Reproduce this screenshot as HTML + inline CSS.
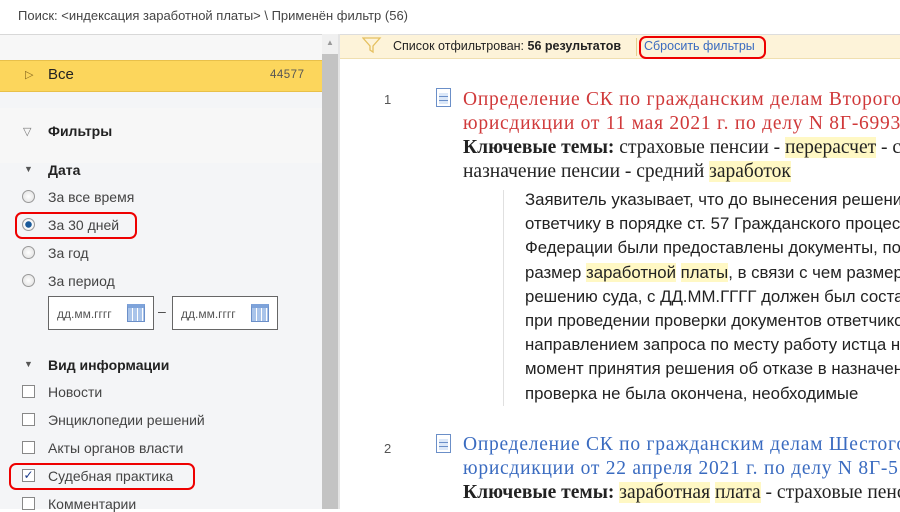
<!DOCTYPE html>
<html><head><meta charset="utf-8"><style>
*{margin:0;padding:0;box-sizing:border-box}
body{width:900px;height:509px;overflow:hidden;background:#fff;font-family:"Liberation Sans",sans-serif;position:relative;color:#333}
.a{position:absolute;white-space:nowrap}
.crumb{left:18px;top:8px;font-size:13px;color:#444}
.left{position:absolute;left:0;top:34px;width:322px;height:475px;background:#f4f5f7;border-top:1px solid #d8d8d8}
.lefttop{position:absolute;left:0;top:0;width:322px;height:25px;background:#f7f7f7}
.all{position:absolute;left:0;top:25px;width:322px;height:32px;background:#fcd65c;border-top:1px solid #e8c04a;border-bottom:1px solid #e8c04a}
.fl{position:absolute;left:0;top:73px;width:322px;height:55px;background:#f7f7f7}
.sb{position:absolute;left:322px;top:34px;width:16px;height:475px;background:#c3c3c3}
.sbt{position:absolute;left:322px;top:34px;width:16px;height:20px;background:#f0f0f0}
.sep{position:absolute;left:338px;top:34px;width:2px;height:475px;background:#e4e4e4}
.bar{position:absolute;left:340px;top:34px;width:560px;height:25px;background:#fdf3d9;border-bottom:1px solid #f0dfb0;border-top:1px solid #ddd}
.t{font-size:14px;color:#444}
.b{font-weight:bold;color:#222}
.radio{position:absolute;width:13px;height:13px;border-radius:50%;border:1px solid #999;background:radial-gradient(#fff,#ddd)}
.cb{position:absolute;width:13px;height:13px;border:1px solid #888;background:#fff}
.date{position:absolute;top:296px;width:106px;height:34px;border:1px solid #666;background:#fff;font-size:12px;color:#555;padding:10px 8px}
.cal{position:absolute;right:8px;top:7px;width:18px;height:18px;border:1px solid #6b8fc8;background:repeating-linear-gradient(90deg,#a9c4ea 0 4px,#fff 4px 5px);border-top:4px solid #7ea3da}
.red{position:absolute;border:2.5px solid #e00;border-radius:7px}
.ser{font-family:"Liberation Serif",serif;font-size:19.5px;letter-spacing:.75px}
.ser2{font-family:"Liberation Serif",serif;font-size:19.5px;letter-spacing:0}
.sans{font-size:16.8px;color:#222}
.hl{background:#fff8c4}
.doc{position:absolute;width:15px;height:19px;border:1px solid #6b8fc8;background:repeating-linear-gradient(180deg,#dce8f8 0 3px,#6b8fc8 3px 4px);background-clip:content-box;padding:4px 2px 2px}
</style></head><body>
<div class="a crumb">Поиск: &lt;индексация заработной платы&gt; \ Применён фильтр (56)</div>
<div class="left"><div class="lefttop"></div><div class="all"></div><div class="fl"></div></div>
<div class="a" style="left:25px;top:68px;font-size:11px;color:#8a6a20">▷</div>
<div class="a t" style="left:48px;top:66px;color:#222;font-size:15px">Все</div>
<div class="a" style="left:270px;top:69px;font-size:11.5px;color:#555;letter-spacing:.5px">44577</div>
<div class="a" style="left:23px;top:125px;font-size:11px;color:#777">▽</div>
<div class="a t b" style="left:48px;top:123px">Фильтры</div>
<div class="a" style="left:24px;top:164px;font-size:9px;color:#555">▼</div>
<div class="a t b" style="left:48px;top:162px">Дата</div>
<div class="radio" style="left:22px;top:190px"></div><div class="a t" style="left:48px;top:189px">За все время</div>
<div class="radio" style="left:22px;top:218px;background:radial-gradient(#1a5a9a 0 3px,#fff 3.5px,#ddd)"></div><div class="a t" style="left:48px;top:217px">За 30 дней</div>
<div class="radio" style="left:22px;top:246px"></div><div class="a t" style="left:48px;top:245px">За год</div>
<div class="radio" style="left:22px;top:274px"></div><div class="a t" style="left:48px;top:273px">За период</div>
<div class="date" style="left:48px">дд.мм.гггг<div class="cal"></div></div>
<div class="a t" style="left:158px;top:303px">–</div>
<div class="date" style="left:172px">дд.мм.гггг<div class="cal"></div></div>
<div class="a" style="left:24px;top:359px;font-size:9px;color:#555">▼</div>
<div class="a t b" style="left:48px;top:357px">Вид информации</div>
<div class="cb" style="left:22px;top:385px"></div><div class="a t" style="left:48px;top:384px">Новости</div>
<div class="cb" style="left:22px;top:413px"></div><div class="a t" style="left:48px;top:412px">Энциклопедии решений</div>
<div class="cb" style="left:22px;top:441px"></div><div class="a t" style="left:48px;top:440px">Акты органов власти</div>
<div class="cb" style="left:22px;top:469px;font-size:12px;line-height:11px;color:#1a3a8a;text-align:center">✓</div><div class="a t" style="left:48px;top:468px">Судебная практика</div>
<div class="cb" style="left:22px;top:497px"></div><div class="a t" style="left:48px;top:496px">Комментарии</div>
<div class="red" style="left:15px;top:212px;width:122px;height:27px"></div>
<div class="red" style="left:9px;top:463px;width:186px;height:27px"></div>
<div class="sb"></div><div class="sbt"></div><div class="a" style="left:326px;top:38px;font-size:8px;color:#999">▲</div>
<div class="sep"></div>
<div class="bar"></div>
<svg class="a" style="left:362px;top:36px" width="20" height="18"><path d="M1 2H18L11 10V16L8 14V10Z" fill="none" stroke="#e5c060" stroke-width="1.3"/></svg>
<div class="a" style="left:393px;top:39px;font-size:12.5px;color:#222">Список отфильтрован: <b>56 результатов</b></div>
<div class="a" style="left:636px;top:38px;width:1px;height:18px;background:#e5cf90"></div>
<div class="a" style="left:644px;top:39px;font-size:12.5px;color:#3a6bc0">Сбросить фильтры</div>
<div class="red" style="left:639px;top:36px;width:127px;height:23px"></div>
<div style="position:absolute;left:340px;top:60px;width:560px;height:449px;overflow:hidden">
<div class="a" style="left:44px;top:32px;font-size:13px;color:#555">1</div>
<div class="doc" style="left:96px;top:28px"></div>
<div class="a ser" style="left:123px;top:28px;color:#d0393a;line-height:24px">Определение СК по гражданским делам Второго кассационного суда общей<br>юрисдикции от 11 мая 2021 г. по делу N 8Г-6993/2021</div>
<div class="a ser2" style="left:123px;top:76px;color:#222;line-height:24px"><b>Ключевые темы:</b> страховые пенсии - <span class="hl">перерасчет</span> - страховые пенсии<br>назначение пенсии - средний <span class="hl">заработок</span></div>
<div class="a" style="left:163px;top:130px;width:1px;height:216px;background:#e0e0e0"></div>
<div class="a sans" style="left:185px;top:128px;line-height:24.2px">Заявитель указывает, что до вынесения решения суда первой инстанции<br>ответчику в порядке ст. 57 Гражданского процессуального кодекса Российской<br>Федерации были предоставлены документы, подтверждающие<br>размер <span class="hl">заработной</span> <span class="hl">платы</span>, в связи с чем размер пенсии истца по<br>решению суда, с ДД.ММ.ГГГГ должен был составлять, однако<br>при проведении проверки документов ответчиком, связанной с<br>направлением запроса по месту работу истца на<br>момент принятия решения об отказе в назначении пенсии<br>проверка не была окончена, необходимые</div>
<div class="a" style="left:44px;top:381px;font-size:13px;color:#555">2</div>
<div class="doc" style="left:96px;top:374px"></div>
<div class="a ser" style="left:123px;top:373px;color:#3a6bc0;line-height:24px">Определение СК по гражданским делам Шестого кассационного суда общей<br>юрисдикции от 22 апреля 2021 г. по делу N 8Г-5123/2021</div>
<div class="a ser2" style="left:123px;top:421px;color:#222;line-height:24px"><b>Ключевые темы:</b> <span class="hl">заработная</span> <span class="hl">плата</span> - страховые пенсии</div>
</div>
</body></html>
